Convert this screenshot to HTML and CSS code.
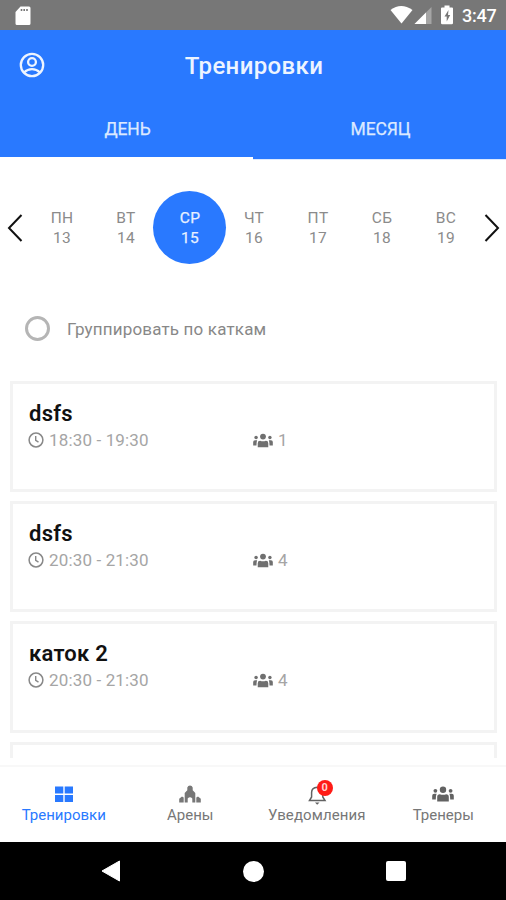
FILE: index.html
```
<!DOCTYPE html>
<html lang="ru">
<head>
<meta charset="utf-8">
<title>Тренировки</title>
<link rel="stylesheet" href="styles.css">
</head>
<body>
<svg class="defs" width="0" height="0">
  <symbol id="clock" viewBox="0 0 16 16"><circle cx="8" cy="8" r="6.9" fill="none" stroke="currentColor" stroke-width="1.5"/><path d="M7.7 4v4.3l2.8 1.8" fill="none" stroke="currentColor" stroke-width="1.4"/></symbol>
  <symbol id="group" viewBox="0 0 22 16"><g fill="currentColor"><circle cx="11" cy="3.7" r="3.2"/><circle cx="3.4" cy="4.8" r="1.9"/><circle cx="18.600" cy="4.8" r="1.9"/><path d="M5.200 15.500v-4.600q0-2.700 2.600-2.700 3.200 1.200 6.400 0 2.600 0 2.600 2.700v4.600zM.2 13.500V9.700q0-2 2-2h2.400q-.8 1.500-.8 5.800zM21.800 13.500V9.700q0-2-2-2h-2.400q.8 1.500.8 5.800z"/></g></symbol>
</svg>
<div class="status">
  <svg class="sd" viewBox="0 0 16 20"><path d="M5.500.5H14a1.500 1.500 0 0 1 1.500 1.500v15.500a1.500 1.500 0 0 1-1.500 1.500H2A1.500 1.500 0 0 1 .5 17.500V6z" fill="#fff"/><path d="M6.500 3v2M9.200 3v2M12 3v2" stroke="#777" stroke-width="1.600"/></svg>
  <svg class="signals" viewBox="0 0 66 22"><path d="M.5 5Q11-3 22.500 5L11.500 18.500z" fill="#fff"/><path d="M41.500 2v17H24.500z" fill="#a5a5a5"/><path d="M36 7.500V19H24.500z" fill="#fff"/><path d="M54.500.5h5v2H62q1 0 1 1V18q0 1.200-1.200 1.200h-9.600Q51 19.200 51 18V3.500q0-1 1-1h2.500z" fill="#fff"/><path d="M58.500 5l-4 6.500h2.200V16.500l3.500-6.500H58z" fill="#777"/></svg>
  <span>3:47</span>
</div>
<header class="header">
  <svg class="profile" viewBox="0 0 26 26" fill="none" stroke="#edf4ff" stroke-width="2.300"><circle cx="13" cy="13" r="11.200"/><circle cx="13" cy="10" r="3.900"/><path d="M5 20.500q3.500-3.300 8-3.300t8 3.300"/></svg>
  <h1>Тренировки</h1>
</header>
<nav class="tabs"><div class="tab active">ДЕНЬ</div><div class="tab">МЕСЯЦ</div></nav>
<section class="week">
  <svg class="arrow" viewBox="0 0 16 28"><path d="M14.500 1L2 14l12.500 13"/></svg>
  <div class="days">
    <div class="day">ПН<span>13</span></div>
    <div class="day">ВТ<span>14</span></div>
    <div class="day selected">СР<span>15</span></div>
    <div class="day">ЧТ<span>16</span></div>
    <div class="day">ПТ<span>17</span></div>
    <div class="day">СБ<span>18</span></div>
    <div class="day">ВС<span>19</span></div>
  </div>
  <svg class="arrow" viewBox="0 0 16 28"><path d="M1.500 1L14 14 1.500 27"/></svg>
</section>
<div class="option"><i class="radio"></i><span>Группировать по каткам</span></div>
<main class="list">
  <article class="card"><h2>dsfs</h2><div class="info"><span class="time"><svg><use href="#clock"/></svg>18:30 - 19:30</span><span class="people"><svg><use href="#group"/></svg>1</span></div></article>
  <article class="card"><h2>dsfs</h2><div class="info"><span class="time"><svg><use href="#clock"/></svg>20:30 - 21:30</span><span class="people"><svg><use href="#group"/></svg>4</span></div></article>
  <article class="card"><h2>каток 2</h2><div class="info"><span class="time"><svg><use href="#clock"/></svg>20:30 - 21:30</span><span class="people"><svg><use href="#group"/></svg>4</span></div></article>
  <article class="card"></article>
</main>
<footer class="bottom">
  <div class="item current"><svg class="icon" viewBox="0 0 22 22" fill="currentColor"><path d="M2 3.500h8.300v7H2zM11.700 3.500H20v7h-8.300zM2 12h8.300v7H2zM11.700 12H20v7h-8.300z"/></svg><span>Тренировки</span></div>
  <div class="item"><svg class="icon" viewBox="0 0 22 22" fill="currentColor"><path d="M8.300 4.500Q9 2.500 11 2.500t2.700 2v2.700L16.300 10v9.500h-3V15.500q-2.300-2.500-4.600 0v4h-3V10l2.600-2.800zM.2 19.500v-3.700L3 13.600l1.700.8v5.100zM17.300 19.500v-5.100l1.700-.8 2.800 2.200v3.700z"/></svg><span>Арены</span></div>
  <div class="item notice"><div class="bell"><svg class="icon" viewBox="0 0 22 22" fill="none" stroke="currentColor" stroke-width="1.500"><path d="M3.500 17.500h15.500L16.800 14V9.500q0-5-5.600-5.300-5.600.3-5.600 5.300V14z"/><path d="M9 19.500h4.500L11.200 21.800z" fill="currentColor" stroke="none"/></svg><b class="badge">0</b></div><span>Уведомления</span></div>
  <div class="item"><svg class="icon team"><use href="#group"/></svg><span>Тренеры</span></div>
</footer>
<div class="system">
  <svg viewBox="0 0 20 22"><path d="M18.500 1v20L1 11z" fill="#fff" stroke="#fff" stroke-linejoin="round"/></svg>
  <i class="home"></i><i class="recent"></i>
</div>
</body>
</html>
```

FILE: styles.css
```
* { box-sizing: border-box; }
body { margin: 0; width: 506px; height: 900px; overflow: hidden; display: flex; flex-direction: column; background: #fff; font-family: Roboto, "Liberation Sans", sans-serif; }
svg { display: block; flex: none; }
.defs { position: absolute; }
.status { height: 30px; background: #777; color: #fff; display: flex; align-items: center; padding: 1px 9px 0 15px; font-size: 18px; font-weight: 500; flex: none; }
.sd { width: 16px; height: 20px; }
.signals { width: 66px; height: 22px; margin: 0 6px 0 auto; }
.status span { width: 35px; letter-spacing: -.2px; }
.header { height: 70px; background: #2979ff; display: grid; grid-template-columns: 64px 1fr 64px; align-items: center; flex: none; }
.profile { width: 26px; height: 26px; margin-left: 19px; }
.header h1 { margin: 2px 0 0 2px; text-align: center; color: #edf4ff; font-size: 24px; line-height: 32px; font-weight: 500; letter-spacing: .35px; }
.tabs { height: 60px; background: #2979ff; display: grid; grid-template-columns: 1fr 1fr; flex: none; }
.tab { display: flex; justify-content: center; align-items: center; padding: 0 0 1px 2px; color: #dce9ff; font-size: 17.500px; letter-spacing: -.1px; font-weight: 400; -webkit-text-stroke: .25px #dce9ff; border-bottom: 1px solid #dce9ff; }
.tab.active { border-bottom: 3px solid #fff; padding: 1px 0 0 2px; }
.week { height: 135px; display: flex; align-items: center; padding: 0 6px 0 7px; flex: none; }
.arrow { width: 16px; height: 28px; fill: none; stroke: #111; stroke-width: 2; }
.days { width: 448px; margin: 0 auto; display: grid; grid-template-columns: repeat(7, 1fr); justify-items: center; }
.day { width: 73px; height: 73px; margin: 0 -5px; padding: 1px 0 0 1px; border-radius: 50%; display: flex; flex-direction: column; align-items: center; justify-content: center; color: #8b8b8b; font-size: 15.500px; line-height: 20px; letter-spacing: .3px; }
.selected { background: #2979ff; color: #e8f1ff; -webkit-text-stroke: .25px #e8f1ff; }
.option { height: 86px; display: flex; align-items: center; padding: 0 0 19px 25px; color: #888; font-size: 17px; letter-spacing: .17px; flex: none; }
.radio { width: 25px; height: 25px; border: 3.5px solid #b5b5b5; border-radius: 50%; margin-right: 17px; }
.option span { padding-top: 1px; }
.list { height: 377px; overflow: hidden; padding: 0 9px 0 10px; display: flex; flex-direction: column; gap: 9px; flex: none; }
.card { height: 111.200px; flex: none; border: 3px solid #f3f3f3; padding: 14px 16px; }
.card h2 { margin: 0; color: #111; font-size: 22px; line-height: 31px; font-weight: 600; letter-spacing: .25px; }
.info { display: grid; grid-template-columns: 224px 1fr; color: #a5a5a5; font-size: 17px; line-height: 22px; letter-spacing: .15px; }
.time, .people { display: flex; align-items: center; }
.time svg { width: 16px; height: 16px; margin: 0 5px 0 -1px; color: #888; }
.people svg { width: 20px; height: 15px; margin-right: 5px; color: #707070; }
.bottom { margin-top: 7px; height: 77px; border-top: 2px solid #f8f8f8; display: grid; grid-template-columns: repeat(4, 1fr); flex: none; color: #777; }
.item { display: flex; flex-direction: column; align-items: center; padding: 16px 0 0 1px; font-size: 15px; line-height: 20px; letter-spacing: 0; }
.icon { width: 22px; height: 22px; }
.team { height: 16px; margin: 3px 0; color: #626262; }
.current { color: #2979ff; }
.bell { position: relative; color: #626262; }
.notice > span { letter-spacing: .1px; }
.badge { position: absolute; left: 11px; top: -3px; width: 16px; height: 16px; border-radius: 50%; background: #ff1b16; color: #ffd0cd; font-size: 11px; line-height: 16px; text-align: center; letter-spacing: 0; }
.system { height: 58px; background: #000; display: grid; grid-template-columns: 222px 63px 221px; align-items: center; justify-items: center; flex: none; }
.system svg { width: 20px; height: 22px; }
.home { width: 21px; height: 21px; border-radius: 50%; background: #fff; }
.recent { width: 20px; height: 20px; border-radius: 2px; background: #fff; }
```
